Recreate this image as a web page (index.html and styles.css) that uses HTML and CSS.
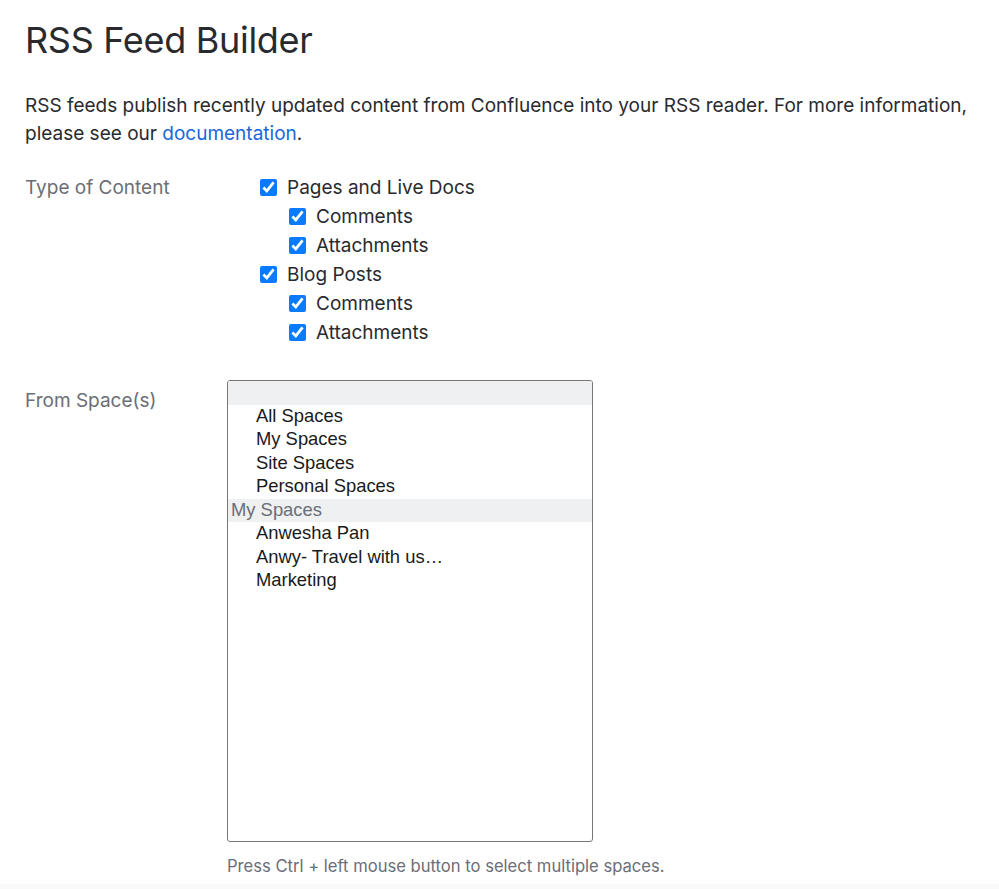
FILE: index.html
```
<!DOCTYPE html>
<html lang="en">

<head>
    <meta charset="UTF-8">
    <meta name="viewport" content="width=device-width, initial-scale=1.0">
    <title>RSS Feed Builder</title>
    <link rel="stylesheet" href="styles.css">
</head>

<body>
    <div class="page">
        <h1 class="title">RSS Feed Builder</h1>
        <p class="intro">RSS feeds publish recently updated content from Confluence into your RSS reader. For more information,
            please see our <a href="#">documentation</a>.</p>

        <div class="field-row">
            <div class="field-label">Type of Content</div>
            <div class="checks">
                <label class="check"><input type="checkbox" checked> Pages and Live Docs</label>
                <label class="check sub"><input type="checkbox" checked> Comments</label>
                <label class="check sub"><input type="checkbox" checked> Attachments</label>
                <label class="check"><input type="checkbox" checked> Blog Posts</label>
                <label class="check sub"><input type="checkbox" checked> Comments</label>
                <label class="check sub"><input type="checkbox" checked> Attachments</label>
            </div>
        </div>

        <div class="field-row spaces-row">
            <div class="field-label spaces-label">From Space(s)</div>
            <div class="spaces-field">
                <div class="space-list">
                    <div class="group-label"></div>
                    <div class="option">All Spaces</div>
                    <div class="option">My Spaces</div>
                    <div class="option">Site Spaces</div>
                    <div class="option">Personal Spaces</div>
                    <div class="group-label">My Spaces</div>
                    <div class="option">Anwesha Pan</div>
                    <div class="option">Anwy- Travel with us…</div>
                    <div class="option">Marketing</div>
                </div>
                <div class="hint">Press Ctrl + left mouse button to select multiple spaces.</div>
            </div>
        </div>
    </div>
    <div class="footer-band"></div>
</body>

</html>
```

FILE: styles.css
```
body {
    margin: 0;
    background: #fff;
    font-family: Inter, "Noto Sans", sans-serif;
    color: #292a2e;
}

.page {
    padding: 18px 25px 0 25px;
}

.title {
    margin: 0;
    font-size: 36px;
    line-height: 44px;
    font-weight: 400;
    letter-spacing: -0.3px;
}

.intro {
    margin: 30px 0 0 0;
    font-size: 19px;
    line-height: 28px;
}

.intro a {
    color: #1868db;
    text-decoration: none;
}

.field-row {
    display: grid;
    grid-template-columns: 202px 1fr;
    margin-top: 25px;
}

.field-label {
    font-size: 19px;
    line-height: 29px;
    color: #6b6e76;
}

.checks {
    display: flex;
    flex-direction: column;
    padding-left: 33px;
}

.check {
    display: flex;
    align-items: center;
    gap: 10px;
    height: 29px;
    font-size: 19px;
}

.check.sub {
    padding-left: 29px;
}

.check input {
    width: 17px;
    height: 17px;
    margin: 0;
    accent-color: #0a7aff;
}

.spaces-row {
    margin-top: 33px;
}

.spaces-label {
    padding-top: 6px;
}

.space-list {
    width: 364px;
    height: 460px;
    border: 1px solid #767676;
    border-radius: 3px;
    font-family: "Liberation Sans", Arial, sans-serif;
    font-size: 18.4px;
    color: #1a1a1a;
    overflow: hidden;
}

.group-label {
    height: 21.5px;
    line-height: 21.5px;
    padding: 0 0 2px 3px;
    background: #eff0f2;
    color: #6b6e76;
}

.option {
    line-height: 21.5px;
    padding: 0 0 2px 28px;
}

.hint {
    margin-top: 13px;
    font-size: 16.6px;
    line-height: 22px;
    color: #6b6e76;
}

.footer-band {
    margin-top: 7px;
    height: 20px;
    background: linear-gradient(#fafafa, #f4f5f6);
}
```
